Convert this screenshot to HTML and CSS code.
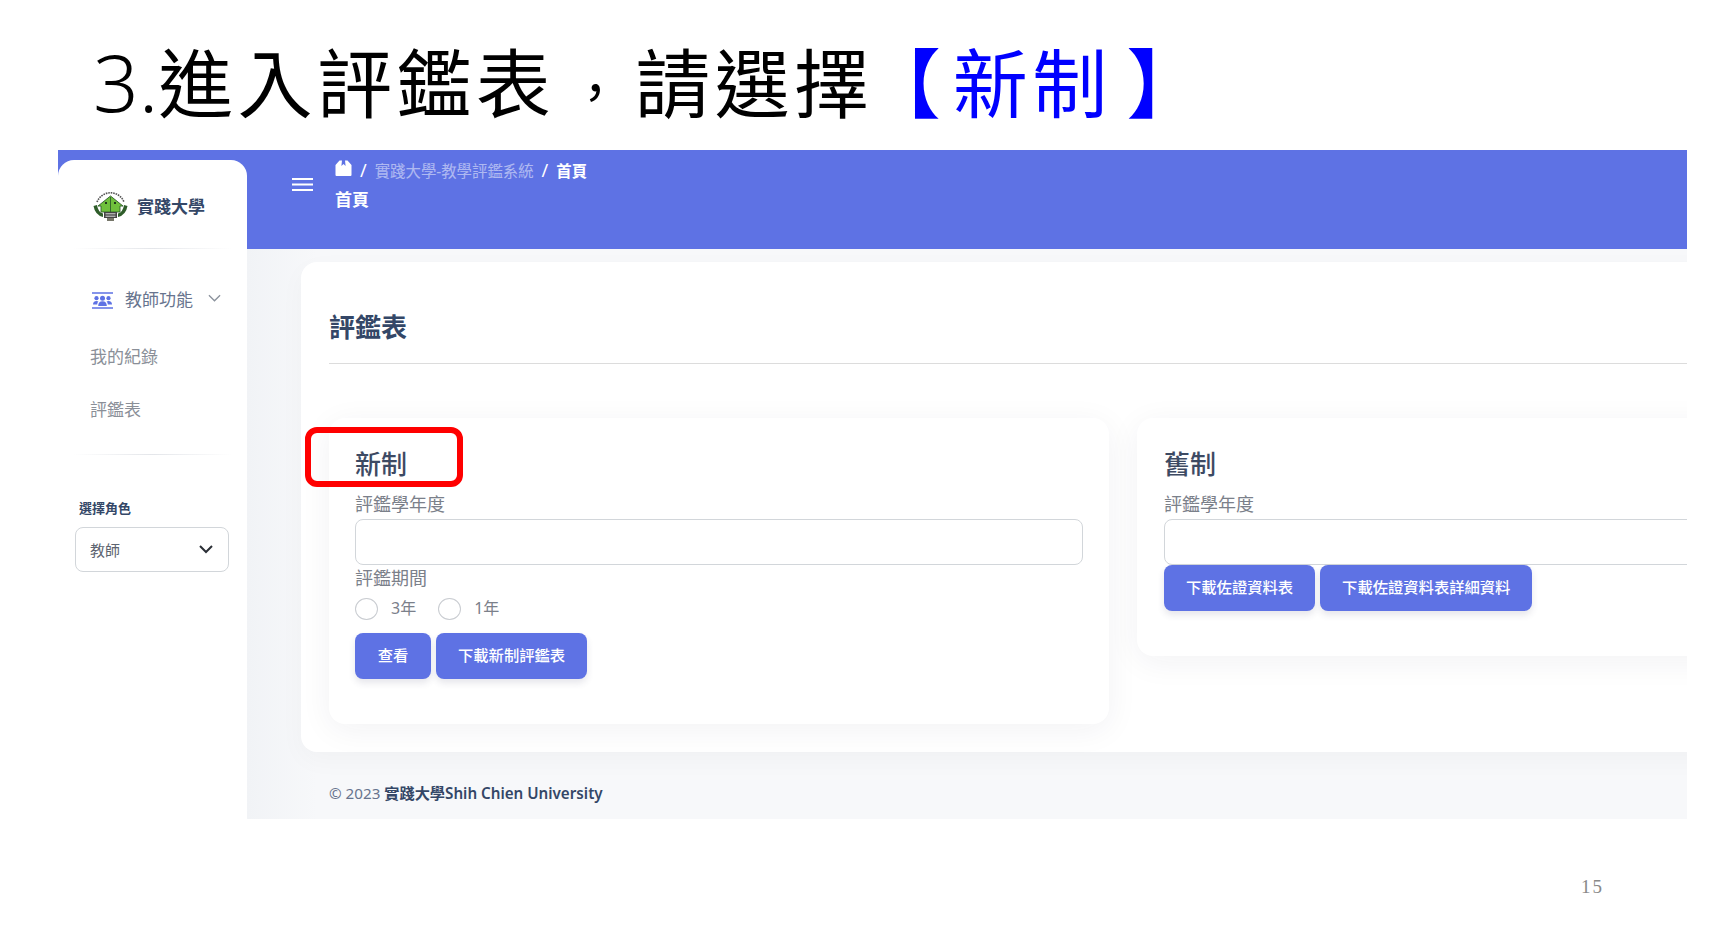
FILE: index.html
```html
<!DOCTYPE html>
<html lang="zh-Hant">
  <head>
    <meta charset="UTF-8" />
    <title>進入評鑑表</title>
    <link rel="stylesheet" href="styles.css">
  </head>
  <body>
    <h1 class="slide-title"><span class="title-num">3.</span>進入評鑑表<span class="title-comma">，</span>請選擇<span class="title-blue"><span class="bracket-open">【</span>新制<span class="bracket-close">】</span></span></h1>

    <div class="app">
      <aside class="sidebar">
        <div class="brand">
          <svg class="brand-logo" viewBox="0 0 35 30">
            <path d="M4 11 A14.5 14.5 0 0 1 31 11" fill="none" stroke="#555" stroke-width="1.6" stroke-dasharray="1.6 0.9"/>
            <path d="M0.5 15 Q2 24 10 26 L10 22.5 Q5 21 4 14 Z" fill="#2f5d2a"/>
            <path d="M34.5 15 Q33 24 25 26 L25 22.5 Q30 21 31 14 Z" fill="#2f5d2a"/>
            <path d="M17.5 5 L30 15 L27 15 L27 21 L8 21 L8 15 L5 15 Z" fill="#6fc03c" stroke="#2f5d2a" stroke-width="0.9"/>
            <path d="M17.5 6 V21" stroke="#2f5d2a" stroke-width="0.9"/>
            <rect x="12" y="11" width="2" height="2" fill="#22391d"/>
            <rect x="21" y="11" width="2" height="2" fill="#22391d"/>
            <rect x="11" y="21" width="13" height="6" fill="#444"/>
            <path d="M12.5 22.8 H22.5 M12.5 25.2 H22.5" stroke="#ddd" stroke-width="1"/>
            <path d="M14 27 H21 V30 H14 Z" fill="#77776a"/>
          </svg>
          <span class="brand-name">實踐大學</span>
        </div>
        <hr class="side-line" />
        <nav class="menu">
          <div class="menu-head">
            <svg class="menu-icon" viewBox="0 0 21 17">
              <path d="M0 1 H21 M0 16 H21" stroke="#5e72e4" stroke-width="1.6"/>
              <circle cx="10.5" cy="6.2" r="2.5" fill="#5e72e4"/>
              <circle cx="4.5" cy="6.2" r="2.1" fill="#5e72e4"/>
              <circle cx="16.5" cy="6.2" r="2.1" fill="#5e72e4"/>
              <path d="M6.2 14 Q6.2 9.2 10.5 9.2 Q14.8 9.2 14.8 14 Z" fill="#5e72e4"/>
              <path d="M1 12.5 Q1 9 4.5 9 Q5.8 9 6.4 9.6 Q5.2 10.8 5.2 12.5 Z" fill="#5e72e4"/>
              <path d="M20 12.5 Q20 9 16.5 9 Q15.2 9 14.6 9.6 Q15.8 10.8 15.8 12.5 Z" fill="#5e72e4"/>
            </svg>
            <span class="menu-label">教師功能</span>
            <svg class="menu-arrow" viewBox="0 0 14 8">
              <path d="M1 1 L7 7 L13 1" fill="none" stroke="#8a919c" stroke-width="1.4"/>
            </svg>
          </div>
          <a class="menu-item" href="#">我的紀錄</a>
          <a class="menu-item" href="#">評鑑表</a>
        </nav>
        <hr class="side-line side-line-low" />
        <div class="role-title">選擇角色</div>
        <div class="role-select">
          <span>教師</span>
          <svg class="role-arrow" viewBox="0 0 14 9">
            <path d="M1 1 L7 7 L13 1" fill="none" stroke="#2b2f36" stroke-width="2"/>
          </svg>
        </div>
      </aside>

      <main class="main">
        <header class="topbar">
          <svg class="hamburger" viewBox="0 0 21 13">
            <path d="M0 1 H21 M0 6.5 H21 M0 12 H21" stroke="#fff" stroke-width="1.8"/>
          </svg>
          <div class="crumbs">
            <div class="crumb-row">
              <svg class="home-icon" viewBox="0 0 17 16">
                <path d="M0.5 5 L4.5 0.5 H7 L6.4 6 L8.5 4 L10.6 6 L10 0.5 H12.5 L16.5 5 V15 Q16.5 16 15.5 16 H1.5 Q0.5 16 0.5 15 Z" fill="#fff"/>
              </svg>
              <span class="crumb-sep">/</span>
              <span class="crumb-dim">實踐大學-教學評鑑系統</span>
              <span class="crumb-sep">/</span>
              <span class="crumb-now">首頁</span>
            </div>
            <div class="page-name">首頁</div>
          </div>
        </header>

        <section class="card">
          <h2 class="card-title">評鑑表</h2>
          <hr class="card-line" />
          <div class="panels">
            <div class="panel panel-new">
              <h3 class="panel-title">新制</h3>
              <label class="field-label">評鑑學年度</label>
              <input class="field" type="text" />
              <label class="field-label">評鑑期間</label>
              <div class="radios">
                <label class="radio"><input type="radio" name="period" /><span>3年</span></label>
                <label class="radio"><input type="radio" name="period" /><span>1年</span></label>
              </div>
              <div class="btns btns-new">
                <button class="btn btn-view">查看</button>
                <button class="btn">下載新制評鑑表</button>
              </div>
              <div class="red-box"></div>
            </div>
            <div class="panel panel-old">
              <h3 class="panel-title">舊制</h3>
              <label class="field-label">評鑑學年度</label>
              <input class="field" type="text" />
              <div class="btns">
                <button class="btn">下載佐證資料表</button>
                <button class="btn">下載佐證資料表詳細資料</button>
              </div>
            </div>
          </div>
        </section>

        <footer class="copyright">© 2023 <b>實踐大學Shih Chien University</b></footer>
      </main>
    </div>

    <div class="page-no">15</div>
  </body>
</html>
```

FILE: styles.css
```css
* {
  box-sizing: border-box;
}
html,
body {
  margin: 0;
  height: 930px;
  overflow: hidden;
  background-color: #fff;
  font-family: "Noto Sans", "Noto Sans CJK TC", sans-serif;
}
.slide-title {
  margin: 0;
  height: 150px;
  padding-left: 93px;
  font-family: "Noto Sans", "Noto Sans CJK TC", sans-serif;
  font-size: 75px;
  font-weight: 400;
  letter-spacing: 4.4px;
  line-height: 161px;
  color: #000;
  white-space: nowrap;
}
.title-num {
  font-size: 80px;
  font-weight: 300;
  letter-spacing: 0;
}
.title-comma {
  display: inline-block;
  width: 80px;
  font-size: 52px;
  letter-spacing: 0;
  text-align: center;
}
.title-blue {
  color: #0000ff;
}
.bracket-open {
  margin-left: -8px;
  margin-right: 8px;
  font-weight: 700;
}
.bracket-close {
  margin-left: 15px;
  font-weight: 700;
}
.app {
  display: flex;
  width: 1629px;
  height: 669px;
  margin-left: 58px;
  background-color: #5e72e4;
  overflow: hidden;
}

/* sidebar */
.sidebar {
  flex: 0 0 189px;
  margin-top: 10px;
  background-color: #fff;
  border-radius: 16px 16px 0 0;
}
.brand {
  display: flex;
  align-items: center;
  gap: 9px;
  height: 88px;
  padding: 3px 0 0 36px;
}
.brand-logo {
  width: 35px;
  height: 30px;
  margin-left: -1px;
}
.brand-name {
  font-size: 17px;
  font-weight: 700;
  color: #344767;
}
.side-line {
  height: 1px;
  margin: 0 15px;
  border: 0;
  background: linear-gradient(90deg, #fff, #e4e6ea 50%, #fff);
}
.menu {
  padding-left: 32px;
}
.menu-head {
  display: flex;
  align-items: center;
  height: 26px;
  margin-top: 38px;
  color: #67748e;
}
.menu-icon {
  width: 21px;
  height: 17px;
  margin-left: 2px;
}
.menu-label {
  margin-left: 12px;
  font-size: 17px;
  line-height: 26px;
}
.menu-arrow {
  width: 13px;
  height: 8px;
  margin: -4px 0 0 15px;
}
.menu-item {
  display: block;
  height: 26px;
  margin-top: 27px;
  font-size: 17px;
  line-height: 26px;
  color: #8a8f98;
  text-decoration: none;
}
.menu-item:first-of-type {
  margin-top: 31px;
}
.side-line-low {
  margin-top: 31px;
}
.role-title {
  margin: 43px 0 0 21px;
  font-size: 13px;
  line-height: 20px;
  font-weight: 700;
  color: #344767;
}
.role-select {
  display: flex;
  align-items: center;
  justify-content: space-between;
  width: 154px;
  height: 45px;
  margin: 9px 0 0 17px;
  padding: 0 15px 0 14px;
  border: 1px solid #d2d6da;
  border-radius: 8px;
  font-size: 15px;
  color: #5d6470;
}
.role-arrow {
  width: 14px;
  height: 9px;
}

/* main */
.main {
  flex: 1;
  min-width: 0;
  overflow: hidden;
  background: linear-gradient(90deg, #f1f3f6, #f7f8fa 70px);
}
.topbar {
  display: flex;
  gap: 23px;
  height: 99px;
  padding: 8px 0 0 45px;
  background-color: #5e72e4;
  color: #fff;
}
.hamburger {
  width: 21px;
  height: 13px;
  margin-top: 20px;
}
.crumbs {
  margin-left: -1px;
}
.crumb-row {
  display: flex;
  align-items: center;
  height: 24px;
  font-size: 15.4px;
}
.home-icon {
  width: 17px;
  height: 16px;
  margin-top: -4px;
}
.crumb-sep {
  margin: 0 8px;
  font-size: 18px;
}
.crumb-dim {
  opacity: 0.5;
}
.crumb-now {
  font-weight: 700;
}
.page-name {
  margin-top: 5px;
  font-size: 17px;
  line-height: 26px;
  font-weight: 700;
}
.card {
  width: 1500px;
  margin: 13px 0 0 54px;
  padding: 48px 28px 28px;
  background-color: #fff;
  border-radius: 16px;
  box-shadow: 0 8px 26px rgba(0, 0, 0, 0.03);
}
.card-title {
  margin: 0;
  font-size: 26px;
  line-height: 34px;
  font-weight: 700;
  color: #344767;
}
.card-line {
  height: 1px;
  margin: 19px 0 0;
  border: 0;
  background-color: #dcdcdc;
}
.panels {
  display: flex;
  align-items: flex-start;
  gap: 28px;
  margin-top: 54px;
}
.panel {
  position: relative;
  padding: 29px 26px 45px 26px;
  background-color: #fff;
  border-radius: 16px;
  box-shadow: 0 6px 32px rgba(30, 40, 70, 0.06);
}
.panel-new {
  flex: 0 0 780px;
}
.panel-old {
  flex: 0 0 700px;
  padding-left: 27px;
}
.panel-title {
  margin: 0 0 11px;
  font-size: 26px;
  line-height: 34px;
  font-weight: 500;
  color: #3d4a63;
}
.field-label {
  display: block;
  height: 26px;
  font-size: 18px;
  line-height: 25px;
  color: #7b808a;
}
.field {
  display: block;
  width: 100%;
  height: 46px;
  margin: 1px 0 1px;
  border: 1px solid #d2d6da;
  border-radius: 8px;
  background-color: #fff;
  outline: 0;
}
.panel-old .field {
  margin-bottom: 0;
}
.radios {
  display: flex;
  gap: 22px;
  margin-top: 6px;
}
.radio {
  display: flex;
  align-items: center;
  gap: 13px;
  height: 22px;
  font-size: 16px;
  color: #7b808a;
}
.radio span {
  margin-bottom: 4px;
}
.radio input {
  appearance: none;
  width: 23px;
  height: 22px;
  margin: 0;
  border: 1px solid #c9ccd1;
  border-radius: 50%;
  background-color: #fff;
}
.btns {
  display: flex;
  gap: 5px;
}
.btns-new {
  margin-top: 13px;
}
.btn {
  height: 46px;
  padding: 0 22px 4px;
  border: 0;
  border-radius: 8px;
  background-color: #5e72e4;
  color: #fff;
  font-family: inherit;
  font-size: 15.3px;
  font-weight: 500;
  box-shadow: 0 4px 7px rgba(50, 50, 93, 0.12);
  cursor: pointer;
}
.btn-view {
  width: 76px;
}
.red-box {
  position: absolute;
  left: -24px;
  top: 9px;
  width: 158px;
  height: 60px;
  border: 6px solid #ff0000;
  border-radius: 12px;
}
.copyright {
  margin: 28px 0 0 82px;
  font-size: 15.2px;
  line-height: 26px;
  color: #67748e;
}
.copyright b {
  font-weight: 600;
  color: #344767;
}
.page-no {
  margin-top: 57px;
  padding-right: 130px;
  font-family: "Liberation Serif", serif;
  font-size: 19px;
  letter-spacing: 2px;
  line-height: 22px;
  color: #898989;
  text-align: right;
}
```
